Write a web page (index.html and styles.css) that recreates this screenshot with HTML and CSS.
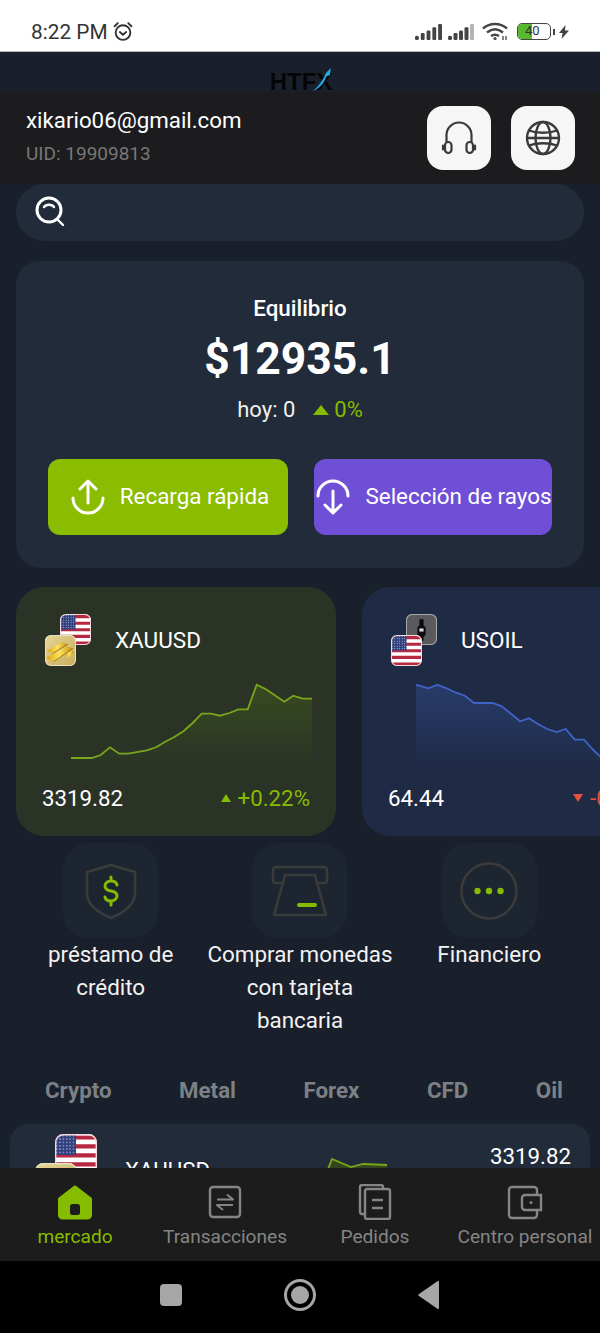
FILE: index.html
```html
<!DOCTYPE html>
<html lang="es">

<head>
    <meta charset="UTF-8">
    <meta name="viewport" content="width=device-width, initial-scale=1.0">
    <title>HTFX</title>
    <link rel="stylesheet" href="styles.css">
</head>

<body>
    <svg class="defs" width="0" height="0">
        <defs>
            <clipPath id="round"><rect width="30" height="30" rx="6" /></clipPath>
            <linearGradient id="gold" x1="0" y1="0" x2="1" y2="1">
                <stop offset="0" stop-color="#e6d596" />
                <stop offset="1" stop-color="#c8ad5c" />
            </linearGradient>
            <linearGradient id="bar" x1="0" y1="0" x2="1" y2="0">
                <stop offset="0" stop-color="#d99f12" />
                <stop offset=".5" stop-color="#ffe45c" />
                <stop offset="1" stop-color="#c98f0e" />
            </linearGradient>
            <linearGradient id="fade-green" x1="0" y1="0" x2="0" y2="1">
                <stop offset="0" stop-color="#4a6a18" stop-opacity=".42" />
                <stop offset="1" stop-color="#4a6a18" stop-opacity="0" />
            </linearGradient>
            <linearGradient id="fade-blue" x1="0" y1="0" x2="0" y2="1">
                <stop offset="0" stop-color="#33549f" stop-opacity=".42" />
                <stop offset="1" stop-color="#33549f" stop-opacity="0" />
            </linearGradient>
            <pattern id="stars" width="2.4" height="2.4" patternUnits="userSpaceOnUse">
                <circle cx="1.2" cy="1.2" r=".5" fill="#dfe3f2" />
            </pattern>
            <symbol id="flag-us" viewBox="0 0 30 30">
                <g clip-path="url(#round)">
                    <rect width="30" height="30" fill="#fff" />
                    <path d="M0 1h30v3H0zM0 7.4h30v3H0zM0 13.8h30v3H0zM0 20.2h30v3H0zM0 26.6h30v3.4H0z" fill="#b5283f" />
                    <rect width="15" height="15" fill="#2f3f7f" />
                    <rect width="15" height="15" fill="url(#stars)" />
                </g>
                <rect x=".5" y=".5" width="29" height="29" rx="5.5" fill="none" stroke="#f3d9de" />
            </symbol>
            <symbol id="flag-gold" viewBox="0 0 30 30">
                <g clip-path="url(#round)">
                    <rect width="30" height="30" fill="url(#gold)" />
                    <path d="M2 15l15-8 5 2-15 9z" fill="url(#bar)" />
                    <path d="M1 22l20-11 6 2-19 13z" fill="url(#bar)" />
                    <path d="M19 19l7-4 2 2-6 5z" fill="url(#bar)" />
                    <path d="M7 18l15-9M8 26l19-13" fill="none" stroke="#8f6d10" stroke-width=".8" />
                </g>
                <rect x=".5" y=".5" width="29" height="29" rx="5.5" fill="none" stroke="#e8e0c4" />
            </symbol>
            <symbol id="flag-oil" viewBox="0 0 30 30">
                <g clip-path="url(#round)">
                    <rect width="30" height="30" fill="#5a5a5e" />
                    <path d="M13 5h4v6l2 2v7l-2 2v4h-4v-4l-2-2v-7l2-2z" fill="#0c0c0c" />
                    <rect x="13" y="14" width="4" height="3" fill="#ddd" />
                </g>
                <rect x=".5" y=".5" width="29" height="29" rx="5.5" fill="none" stroke="#a8a8a8" />
            </symbol>
        </defs>
    </svg>

    <div class="phone">
        <div class="status">
            <div class="status-left">
                <span class="clock">8:22 PM</span>
                <svg width="22" height="21" viewBox="0 0 20 20" fill="none" stroke="#333" stroke-width="1.8">
                    <circle cx="10" cy="11" r="7" />
                    <path d="M7 10.5l3 2.5 3-2.5M2 5l3-3M18 5l-3-3" stroke-linecap="round" />
                </svg>
            </div>
            <div class="status-right">
                <svg class="sig-a" width="27" height="17" viewBox="0 0 28 16" preserveAspectRatio="none" fill="#444">
                    <rect x="0" y="12" width="4" height="4" rx="1.5" />
                    <rect x="6" y="9.5" width="4" height="6.5" rx="1.2" />
                    <rect x="12" y="7" width="4" height="9" rx="1.2" />
                    <rect x="18" y="4" width="4" height="12" rx="1.2" />
                    <rect x="24" y="1" width="4" height="15" rx="1.2" />
                </svg>
                <svg class="sig-b" width="26" height="17" viewBox="0 0 26 16" preserveAspectRatio="none" fill="#444">
                    <rect x="0" y="12" width="4" height="4" rx="1.5" />
                    <rect x="5.5" y="9.5" width="4" height="6.5" rx="1.2" />
                    <rect x="11" y="7" width="4" height="9" rx="1.2" />
                    <rect x="16.5" y="4" width="4" height="12" rx="1.2" />
                    <rect x="22" y="1" width="4" height="15" rx="1.2" fill="#b5b5b5" />
                </svg>
                <svg class="wifi" width="26" height="19" viewBox="0 0 26 19" fill="none" stroke="#444" stroke-width="2.4">
                    <path d="M1 6.5C8 .5 18 .5 25 6.5M5 10.5c5-4 11-4 16 0M9 14c3-2 5-2 8 0" />
                    <circle cx="13" cy="16.5" r="1.6" fill="#444" stroke="none" />
                    <path d="M21 14v4M24 14v4" stroke-width="1.3" />
                </svg>
                <div class="battery">
                    <span class="battery-fill"></span>
                    <span class="battery-num">40</span>
                </div>
                <span class="battery-cap"></span>
                <svg width="10" height="14" viewBox="0 0 10 14" fill="#444">
                    <path d="M6.5 0L0 8h3.6L2.6 14 10 5.6H6z" />
                </svg>
            </div>
        </div>

        <div class="main">
            <div class="logo">
                <span class="logo-text">HTFX</span>
                <svg class="logo-mark" width="21" height="23" viewBox="0 0 20 22">
                    <path d="M1 22C6 18 9 13 12 8l1-3 5-5-1 7-3 1-3 6c-3 4-6 6-10 8z" fill="#1fa8dc" />
                </svg>
            </div>

            <div class="account">
                <div>
                    <div class="email">xikario06@gmail.com</div>
                    <div class="uid">UID: 19909813</div>
                </div>
                <div class="account-btns">
                    <div class="round-btn">
                        <svg width="36" height="36" viewBox="0 0 36 36" fill="none" stroke="#3a3a3a" stroke-width="2.200" stroke-linecap="round">
                            <path d="M5.500 22v-7a12.500 12.500 0 0 1 25 0v7" />
                            <rect x="4" y="22" width="6.500" height="11" rx="3.200" />
                            <rect x="25.500" y="22" width="6.500" height="11" rx="3.200" />
                            <path d="M2 25.500v4M34 25.500v4" />
                        </svg>
                    </div>
                    <div class="round-btn">
                        <svg width="36" height="36" viewBox="0 0 36 36" fill="none" stroke="#3a3a3a" stroke-width="2.400">
                            <circle cx="18" cy="18" r="16" />
                            <ellipse cx="18" cy="18" rx="7.500" ry="16" />
                            <path d="M4 10.500c8 3 20 3 28 0M4 25.500c8-3 20-3 28 0M2 18h32" />
                        </svg>
                    </div>
                </div>
            </div>

            <div class="search">
                <svg width="32" height="34" viewBox="0 0 32 34" fill="none" stroke="#fff" stroke-width="3" stroke-linecap="round">
                    <circle cx="15" cy="15" r="12" />
                    <path d="M10 12c2-3 8-3 10 0M23 24l6 6" stroke-width="2.400" />
                </svg>
            </div>

            <div class="balance">
                <div class="balance-title">Equilibrio</div>
                <div class="balance-num">$12935.1</div>
                <div class="balance-day">
                    <span>hoy: 0</span>
                    <span class="up-tri big-tri"></span>
                    <span class="green">0%</span>
                </div>
                <div class="balance-btns">
                    <div class="action action-green">
                        <svg width="34" height="36" viewBox="0 0 34 36" fill="none" stroke="#fff" stroke-width="3" stroke-linecap="round" stroke-linejoin="round">
                            <path d="M2 19a15 15 0 1 0 30 0M17 24V3M9 10l8-8 8 8" />
                        </svg>
                        <span>Recarga rápida</span>
                    </div>
                    <div class="action action-purple">
                        <svg width="34" height="36" viewBox="0 0 34 36" fill="none" stroke="#fff" stroke-width="3" stroke-linecap="round" stroke-linejoin="round">
                            <path d="M2 17a15 15 0 1 1 30 0M17 12v21M9 26l8 8 8-8" />
                        </svg>
                        <span>Selección de rayos</span>
                    </div>
                </div>
            </div>

            <div class="carousel">
                <div class="quote quote-green">
                    <div class="quote-head">
                        <div class="stack">
                            <svg class="stack-back"><use href="#flag-us" /></svg>
                            <svg class="stack-front"><use href="#flag-gold" /></svg>
                        </div>
                        <span class="quote-name">XAUUSD</span>
                    </div>
                    <svg class="spark" width="241" height="90" viewBox="0 0 241 90">
                        <path d="M0 78L20.700 78 29.700 75 39 67.300 48.300 73.700 57.300 73.700 75.700 70.300 85 67.300 94.300 61.700 103.300 57 112.700 51 121.700 43 130.700 33.700 140 33.700 149 35.700 158.300 33 167.300 29.300 176.700 29.300 185.700 4.700 195 9.300 213.300 21.700 222.300 15.700 231.700 18.700 241 18.700V90H0z" fill="url(#fade-green)" />
                        <path d="M0 78L20.700 78 29.700 75 39 67.300 48.300 73.700 57.300 73.700 75.700 70.300 85 67.300 94.300 61.700 103.300 57 112.700 51 121.700 43 130.700 33.700 140 33.700 149 35.700 158.300 33 167.300 29.300 176.700 29.300 185.700 4.700 195 9.300 213.300 21.700 222.300 15.700 231.700 18.700 241 18.700" fill="none" stroke="#79a61a" stroke-width="1.800" />
                    </svg>
                    <div class="quote-foot">
                        <span>3319.82</span>
                        <span class="change green"><span class="up-tri"></span>+0.22%</span>
                    </div>
                </div>

                <div class="quote quote-blue">
                    <div class="quote-head">
                        <div class="stack">
                            <svg class="stack-back"><use href="#flag-oil" /></svg>
                            <svg class="stack-front"><use href="#flag-us" /></svg>
                        </div>
                        <span class="quote-name">USOIL</span>
                    </div>
                    <svg class="spark spark-blue" width="241" height="90" viewBox="0 0 241 90">
                        <path d="M0 4.700L12.300 8.300 21.300 4.700 30.700 8.300 40 12.700 49 15.700 58 23 76.700 23 85.700 26.300 95 33.700 104 41.300 113 38.300 122.300 44.300 131.300 49 140.700 52 149.700 49 158.700 59.700 168 59.700 177.300 70 184 76.300 195 80 215 76 241 84V90H0z" fill="url(#fade-blue)" />
                        <path d="M0 4.700L12.300 8.300 21.300 4.700 30.700 8.300 40 12.700 49 15.700 58 23 76.700 23 85.700 26.300 95 33.700 104 41.300 113 38.300 122.300 44.300 131.300 49 140.700 52 149.700 49 158.700 59.700 168 59.700 177.300 70 184 76.300 195 80 215 76 241 84" fill="none" stroke="#3f63c8" stroke-width="1.800" />
                    </svg>
                    <div class="quote-foot">
                        <span>64.44</span>
                        <span class="change red"><span class="down-tri"></span>-0.18%</span>
                    </div>
                </div>
            </div>

            <div class="shortcuts">
                <div class="shortcut">
                    <div class="shortcut-icon">
                        <svg width="52" height="56" viewBox="0 0 52 56" fill="none" stroke="#3b3b3b" stroke-width="2.600" stroke-linejoin="round">
                            <path d="M26 2l24 7v21c0 12-12 20-24 25C14 50 2 42 2 30V9z" />
                            <path d="M32 22c-.5-2.500-3-4-6-4-3.500 0-6 2-6 5s2.500 4.500 6 5 6 2.500 6 5-2.500 5-6 5c-3 0-5.500-1.500-6-4M26 14v4M26 38v4" stroke="#86bc00" stroke-width="3" stroke-linecap="round" />
                        </svg>
                    </div>
                    <div class="shortcut-name">préstamo de crédito</div>
                </div>
                <div class="shortcut">
                    <div class="shortcut-icon">
                        <svg width="58" height="52" viewBox="0 0 58 52" fill="none" stroke="#3b3b3b" stroke-width="2.600" stroke-linejoin="round">
                            <path d="M12 18H5a3 3 0 0 1-3-3V5a3 3 0 0 1 3-3h48a3 3 0 0 1 3 3v10a3 3 0 0 1-3 3h-7" />
                            <path d="M14 10h30l11 40H3z" />
                            <path d="M28 40h16" stroke="#86bc00" stroke-width="4" stroke-linecap="round" />
                        </svg>
                    </div>
                    <div class="shortcut-name">Comprar monedas con tarjeta bancaria</div>
                </div>
                <div class="shortcut">
                    <div class="shortcut-icon">
                        <svg width="58" height="58" viewBox="0 0 58 58" fill="none" stroke="#3b3b3b" stroke-width="2.600">
                            <circle cx="29" cy="29" r="27.500" />
                            <g fill="#86bc00" stroke="none">
                                <circle cx="17.500" cy="29" r="3.200" />
                                <circle cx="29" cy="29" r="3.200" />
                                <circle cx="40.500" cy="29" r="3.200" />
                            </g>
                        </svg>
                    </div>
                    <div class="shortcut-name">Financiero</div>
                </div>
            </div>

            <div class="tabs">
                <span>Crypto</span>
                <span>Metal</span>
                <span>Forex</span>
                <span>CFD</span>
                <span>Oil</span>
            </div>

            <div class="row">
                <div class="row-stack">
                    <svg class="row-back"><use href="#flag-us" /></svg>
                    <svg class="row-front"><use href="#flag-gold" /></svg>
                </div>
                <span class="row-name">XAUUSD</span>
                <svg class="row-spark" width="64" height="40" viewBox="0 0 64 40">
                    <path d="M0 24L9 1 28 9 40 6 64 7V40H0z" fill="#34451f" />
                    <path d="M0 24L9 1 28 9 40 6 64 7" fill="none" stroke="#79a61a" stroke-width="1.800" />
                </svg>
                <span class="row-price">3319.82</span>
            </div>
        </div>

        <div class="tabbar">
            <div class="tabbar-item tabbar-on">
                <svg width="36" height="36" viewBox="0 0 36 36">
                    <path d="M18 3L2.500 15v16a3 3 0 0 0 3 3h25a3 3 0 0 0 3-3V15z" fill="#86bc00" stroke="#86bc00" stroke-width="3" stroke-linejoin="round" />
                    <rect x="13" y="20" width="10" height="11" rx="2.500" fill="#1c1c1c" />
                </svg>
                <span>mercado</span>
            </div>
            <div class="tabbar-item">
                <svg width="36" height="36" viewBox="0 0 36 36" fill="none" stroke="#858585" stroke-width="2.400">
                    <rect x="3" y="3" width="30" height="30" rx="3" />
                    <path d="M10 15.500h16l-6-5M26 21H10l6 5" stroke-width="2" stroke-linejoin="round" />
                </svg>
                <span>Transacciones</span>
            </div>
            <div class="tabbar-item">
                <svg width="36" height="36" viewBox="0 0 36 36" fill="none" stroke="#858585" stroke-width="2.400">
                    <path d="M8 30H5a2 2 0 0 1-2-2V3a2 2 0 0 1 2-2h19a2 2 0 0 1 2 2v2" />
                    <rect x="8" y="5" width="25" height="30" rx="2" />
                    <path d="M15 16h11M15 24h11" />
                </svg>
                <span>Pedidos</span>
            </div>
            <div class="tabbar-item">
                <svg width="36" height="36" viewBox="0 0 36 36" fill="none" stroke="#858585" stroke-width="2.400">
                    <path d="M30 11V6a3 3 0 0 0-3-3H5a3 3 0 0 0-3 3v25a3 3 0 0 0 3 3h22a3 3 0 0 0 3-3v-5" />
                    <path d="M34 11H18a3 3 0 0 0-3 3v9a3 3 0 0 0 3 3h16z" />
                    <circle cx="24" cy="18.500" r="1.500" fill="#858585" stroke="none" />
                </svg>
                <span>Centro personal</span>
            </div>
        </div>

        <div class="sysnav">
            <span class="sys-square"></span>
            <span class="sys-circle"><span class="sys-dot"></span></span>
            <svg width="22" height="28" viewBox="0 0 22 28">
                <path d="M21 1v26a1 1 0 0 1-1.600.8L1 15a1.200 1.200 0 0 1 0-2L19.400.2A1 1 0 0 1 21 1z" fill="#a6a6a6" />
            </svg>
        </div>
    </div>
</body>

</html>
```

FILE: styles.css
```css
*{
    margin: 0;
    padding: 0;
    box-sizing: border-box;
}
body{
    font-family: Roboto, "Noto Sans", sans-serif;
    background: #19202b;
}
.defs{
    position: absolute;
}
.phone{
    width: 600px;
    height: 1333px;
    display: flex;
    flex-direction: column;
    overflow: hidden;
}

/* status bar */
.status{
    height: 52px;
    flex: none;
    background: #fff;
    border-bottom: 1px solid #b9b9b9;
    padding: 0 31px;
    display: flex;
    justify-content: space-between;
    align-items: center;
}
.status-left{
    display: flex;
    align-items: center;
    gap: 4px;
    margin-top: 12px;
}
.clock{
    font-size: 20.800px;
    color: #333;
}
.status-right{
    display: flex;
    align-items: center;
    margin-top: 12px;
}
.sig-a{
    margin-right: 6px;
}
.sig-b{
    margin-right: 8px;
}
.wifi{
    margin-right: 9px;
}
.battery{
    width: 34px;
    height: 17px;
    border: 1.500px solid #444;
    border-radius: 5px;
    position: relative;
    overflow: hidden;
}
.battery-fill{
    display: block;
    width: 14px;
    height: 100%;
    background: #57b92e;
}
.battery-num{
    position: absolute;
    left: 7px;
    top: 0;
    font-size: 13px;
    line-height: 14px;
    color: #333;
}
.battery-cap{
    width: 2px;
    height: 6px;
    background: #444;
    margin-left: 2px;
    margin-right: 4px;
}

/* scrolling page */
.main{
    flex: 1;
    min-height: 0;
    overflow: hidden;
}
.logo{
    height: 40px;
    display: flex;
    justify-content: center;
    align-items: flex-end;
    position: relative;
}
.logo-text{
    font-family: "Liberation Sans", sans-serif;
    font-weight: bold;
    font-size: 24px;
    line-height: 20px;
    color: #050505;
    margin-left: 2px;
}
.logo-mark{
    position: absolute;
    left: 312px;
    top: 16px;
}
.account{
    height: 92px;
    background: #1c1c1e;
    padding: 0 25px 0 26px;
    display: flex;
    justify-content: space-between;
    align-items: center;
}
.email{
    font-size: 22.300px;
    line-height: 26px;
    color: #fff;
    margin-top: -5px;
}
.uid{
    font-size: 19px;
    line-height: 22px;
    margin-top: 10px;
    color: #777;
}
.account-btns{
    display: flex;
    gap: 20px;
}
.round-btn{
    width: 64px;
    height: 64px;
    background: #f6f6f6;
    border-radius: 16px;
    display: flex;
    justify-content: center;
    align-items: center;
}
.search{
    height: 57px;
    margin: 0 16px;
    background: #212b39;
    border-radius: 28px;
    padding: 11px 0 0 18px;
}

/* balance card */
.balance{
    margin: 20px 16px 0;
    height: 307px;
    background: #212b39;
    border-radius: 24px;
    padding: 32px 32px 0;
    text-align: center;
    color: #fff;
}
.balance-title{
    font-size: 22.400px;
    line-height: 30px;
    font-weight: 500;
}
.balance-num{
    font-size: 44.500px;
    line-height: 58px;
    font-weight: 700;
    margin-top: 7px;
}
.balance-day{
    font-size: 22px;
    line-height: 28px;
    margin-top: 8px;
    display: flex;
    justify-content: center;
    align-items: center;
    color: #f0f0f0;
}
.green{
    color: #86bc00;
}
.red{
    color: #e8503a;
}
.up-tri{
    display: inline-block;
    width: 0;
    height: 0;
    border-left: 5.500px solid transparent;
    border-right: 5.500px solid transparent;
    border-bottom: 8px solid #86bc00;
}
.down-tri{
    display: inline-block;
    width: 0;
    height: 0;
    border-left: 5.500px solid transparent;
    border-right: 5.500px solid transparent;
    border-top: 8px solid #e8503a;
}
.big-tri{
    border-left-width: 8px;
    border-right-width: 8px;
    border-bottom-width: 10px;
    margin: 0 5px 0 18px;
}
.balance-btns{
    display: flex;
    gap: 26px;
    margin-top: 35px;
}
.action{
    flex: 1;
    height: 76px;
    border-radius: 12px;
    display: flex;
    justify-content: center;
    align-items: center;
    gap: 15px;
    font-size: 22.400px;
    white-space: nowrap;
}
.action span{
    margin-top: -2px;
}
.action-green{
    background: #8abc00;
    padding-left: 4px;
}
.action-purple{
    background: #6f4fd6;
    padding-left: 2px;
}

/* quotes */
.carousel{
    display: flex;
    gap: 26px;
    margin-top: 19px;
    padding-left: 16px;
    overflow: hidden;
}
.quote{
    width: 320px;
    height: 249px;
    flex: none;
    border-radius: 28px;
    padding: 27px 26px 0;
    color: #fff;
}
.quote-green{
    background: #2a3326;
}
.quote-blue{
    background: #1f2a45;
}
.quote-head{
    display: flex;
    align-items: center;
    height: 52px;
    padding-left: 3px;
}
.stack{
    width: 46px;
    height: 52px;
    position: relative;
    margin-right: 24px;
}
.stack-back,.stack-front{
    position: absolute;
    width: 31px;
    height: 31px;
}
.stack-back{
    left: 15px;
    top: 0;
}
.stack-front{
    left: 0;
    top: 21px;
}
.quote-name{
    font-size: 22.500px;
}
.spark{
    display: block;
    margin: 14px 0 0 29px;
}
.spark-blue{
    margin-left: 28px;
}
.quote-foot{
    display: flex;
    justify-content: space-between;
    align-items: center;
    font-size: 22.300px;
    line-height: 28px;
    margin-top: 14px;
}
.change{
    display: flex;
    align-items: center;
    gap: 7px;
}

/* shortcuts */
.shortcuts{
    display: grid;
    grid-template-columns: repeat(3, 1fr);
    padding: 0 16px;
    margin-top: 7px;
}
.shortcut{
    display: flex;
    flex-direction: column;
    align-items: center;
    text-align: center;
}
.shortcut-icon{
    width: 95px;
    height: 95px;
    background: #1d2530;
    border-radius: 26px;
    display: flex;
    justify-content: center;
    align-items: center;
}
.shortcut-name{
    font-size: 22.400px;
    line-height: 33px;
    color: #f2f2f2;
}

/* market list */
.tabs{
    display: flex;
    gap: 67.500px;
    padding-left: 45px;
    margin-top: 37px;
    font-size: 22.300px;
    line-height: 32px;
    font-weight: 700;
    color: #7c8186;
}
.row{
    margin: 18px 10px 0;
    height: 90px;
    background: #212b39;
    border-radius: 18px;
    position: relative;
    color: #fff;
}
.row-stack{
    position: absolute;
    left: 25px;
    top: 10px;
    width: 64px;
    height: 72px;
}
.row-back,.row-front{
    position: absolute;
    width: 42px;
    height: 42px;
}
.row-back{
    left: 20px;
    top: 0;
}
.row-front{
    left: 0;
    top: 29px;
}
.row-name{
    position: absolute;
    left: 115px;
    top: 33px;
    font-size: 22.300px;
}
.row-spark{
    position: absolute;
    left: 313px;
    top: 34px;
}
.row-price{
    position: absolute;
    right: 19px;
    top: 19px;
    font-size: 22.300px;
}

/* bottom tabs */
.tabbar{
    height: 93px;
    flex: none;
    background: #1c1c1c;
    display: grid;
    grid-template-columns: repeat(4, 150px);
}
.tabbar-item{
    display: flex;
    flex-direction: column;
    align-items: center;
    padding-top: 16px;
    font-size: 19.100px;
    line-height: 24px;
    color: #858585;
    white-space: nowrap;
}
.tabbar-item span{
    margin-top: 5px;
}
.tabbar-on{
    color: #86bc00;
}
.sysnav{
    height: 72px;
    flex: none;
    background: #000;
    display: flex;
    justify-content: center;
    align-items: center;
    gap: 102px;
    padding-bottom: 4px;
}
.sys-square{
    width: 22px;
    height: 22px;
    border-radius: 4px;
    background: #a6a6a6;
}
.sys-circle{
    width: 32px;
    height: 32px;
    border: 3px solid #a6a6a6;
    border-radius: 50%;
    display: flex;
    justify-content: center;
    align-items: center;
}
.sys-dot{
    width: 18px;
    height: 18px;
    border-radius: 50%;
    background: #a6a6a6;
}
```
